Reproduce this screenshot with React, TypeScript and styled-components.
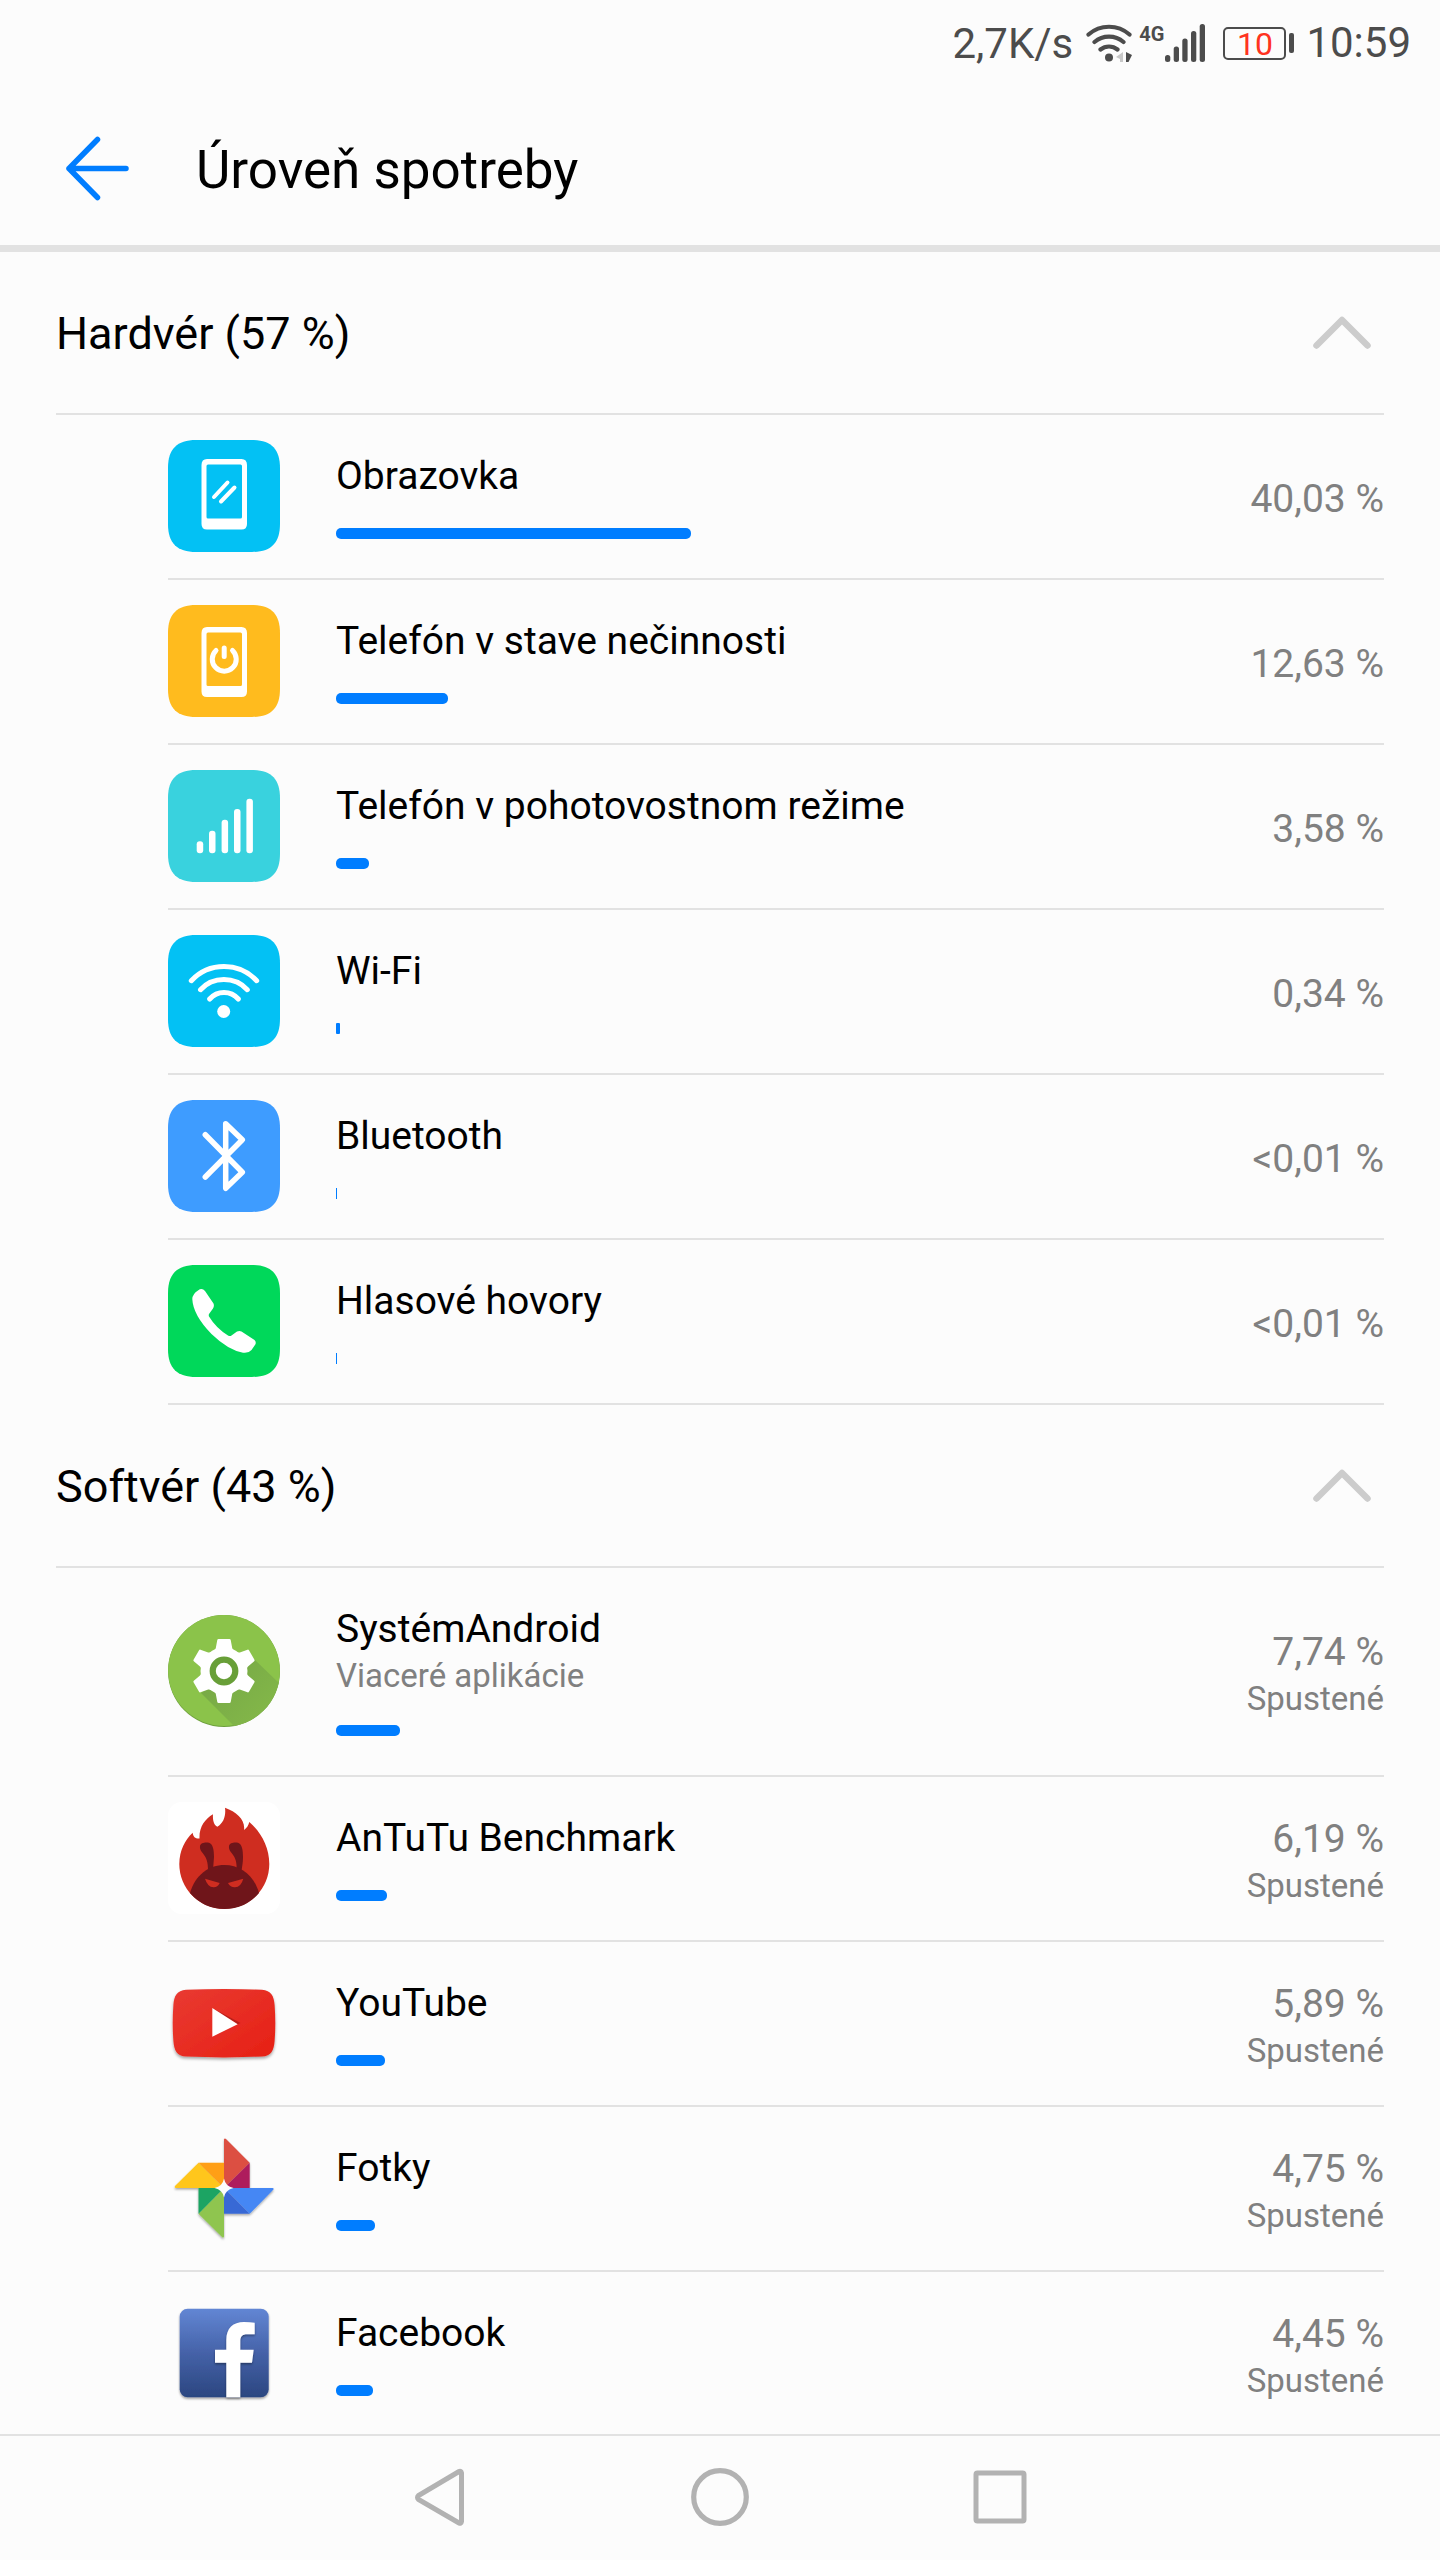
import React, { useState } from "react";
import styled, { createGlobalStyle } from "styled-components";

const GlobalStyle = createGlobalStyle`
  *, *::before, *::after { box-sizing: border-box; }
  body {
    margin: 0;
    background: #fcfcfc;
    color: #000;
    font-family: Roboto, "Noto Sans", sans-serif;
  }
  button {
    padding: 0;
    border: 0;
    background: none;
    color: inherit;
    font: inherit;
    text-align: left;
    cursor: pointer;
  }
  svg { display: block; flex: none; }
`;

const Screen = styled.div`
  display: flex;
  flex-direction: column;
  height: 100vh;
`;

const StatusBar = styled.div`
  display: flex;
  flex: none;
  align-items: center;
  justify-content: flex-end;
  height: 90px;
  padding: 0 29px 4px 0;
  color: #4c4c4c;
  font-size: 42px;
  line-height: 48px;
`;

const Speed = styled.span`
  padding-top: 2px;
  margin-right: 13px;
`;

const Network = styled.span`
  display: flex;
  align-items: flex-start;
  height: 38px;
  margin: 0 17px 0 6px;
`;

const NetworkType = styled.span`
  font-family: "Liberation Sans Narrow", Roboto, sans-serif;
  font-size: 20px;
  font-weight: 700;
  line-height: 20px;
`;

const Battery = styled.span`
  display: flex;
  align-items: center;
  gap: 3px;
  margin-right: 12px;

  &::after {
    content: "";
    width: 5px;
    height: 20px;
    border-radius: 2px;
    background: #4c4c4c;
  }
`;

const BatteryLevel = styled.span`
  width: 63px;
  height: 33px;
  border: 2px solid #4c4c4c;
  border-radius: 5px;
  color: #ff3320;
  font-size: 32px;
  line-height: 30px;
  text-align: center;
`;

const AppBar = styled.header`
  display: flex;
  flex: none;
  align-items: center;
  gap: 60px;
  height: 162px;
  padding: 0 56px;
  border-bottom: 7px solid #e2e2e2;
`;

const Title = styled.h1`
  margin: 0;
  padding-top: 4px;
  font-size: 53px;
  font-weight: 400;
  line-height: 64px;
`;

const Content = styled.main`
  flex: 1;
  min-height: 0;
  overflow-y: auto;
  scrollbar-width: none;
`;

const Section = styled.section`
  padding: 0 56px;
`;

const SectionTitle = styled.h2`
  margin: 0;
  border-bottom: 2px solid #e2e2e2;
  font-size: 45px;
  font-weight: 400;
  line-height: 52px;
`;

const SectionToggle = styled.button`
  display: flex;
  align-items: center;
  justify-content: space-between;
  width: 100%;
  height: 161px;
  padding-right: 13px;
`;

const SectionLabel = styled.span`
  padding-top: 2px;
`;

const Chevron = styled.svg<{ $open: boolean }>`
  transform: ${(p) => (p.$open ? "none" : "rotate(180deg)")};
`;

const List = styled.ul`
  margin: 0;
  padding: 0 0 0 112px;
  list-style: none;
`;

const Row = styled.li<{ $last: boolean }>`
  display: flex;
  align-items: center;
  gap: 56px;
  padding: 25px 0 26px;
  border-bottom: ${(p) => (p.$last ? "0" : "2px solid #e2e2e2")};
`;

const Usage = styled.div`
  flex: 1;
  min-width: 0;
  padding: 11px 0 13px;
`;

const Name = styled.div`
  font-size: 39px;
  line-height: 50px;
`;

const Note = styled.div`
  color: #808080;
  font-size: 33px;
  line-height: 44px;
`;

const Bar = styled.div<{ $width: number }>`
  width: ${(p) => p.$width}px;
  height: 11px;
  margin-top: 27px;
  border-radius: ${(p) => Math.min(5, Math.floor(p.$width / 4))}px;
  background: #007dff;
`;

const Reading = styled.div`
  padding-top: 6px;
  text-align: right;
  white-space: nowrap;
`;

const Percent = styled.div`
  color: #808080;
  font-size: 39px;
  line-height: 50px;
`;

const NavBar = styled.nav`
  display: flex;
  flex: none;
  justify-content: center;
  height: 126px;
  border-top: 2px solid #e2e2e2;
`;

const NavButton = styled.button`
  display: flex;
  align-items: center;
  justify-content: center;
  width: 280px;
`;

const Icon = ({ children }: { children: React.ReactNode }) => (
  <svg width="112" height="112" viewBox="0 0 112 112" aria-hidden="true">
    {children}
  </svg>
);

const Tile = ({ color }: { color: string }) => (
  <path
    fill={color}
    d="M0 28C0 9 9 0 28 0H84C103 0 112 9 112 28V84C112 103 103 112 84 112H28C9 112 0 103 0 84Z"
  />
);

const ScreenIcon = () => (
  <Icon>
    <Tile color="#03c1f4" />
    <path
      fill="#fff"
      fillRule="evenodd"
      d="M39 19H73.500Q79 19 79 25V84Q79 89.500 73.500 89.500H39Q33.500 89.500 33.500 84V25Q33.500 19 39 19ZM40 24.500Q38.500 24.500 38.500 26V77Q38.500 78.500 40 78.500H72.500Q74 78.500 74 77V26Q74 24.500 72.500 24.500Z"
    />
    <path d="M46 57 59.500 42.500M53 61.500 66.500 47.500" stroke="#fff" strokeWidth="4" strokeLinecap="round" />
  </Icon>
);

const IdleIcon = () => (
  <Icon>
    <Tile color="#ffbb1e" />
    <path
      fill="#fff"
      fillRule="evenodd"
      d="M39 22H73.500Q79 22 79 28V86.500Q79 92 73.500 92H39Q33.500 92 33.500 86.500V28Q33.500 22 39 22ZM40 27.500Q38.500 27.500 38.500 29V79.500Q38.500 81 40 81H72.500Q74 81 74 79.500V29Q74 27.500 72.500 27.500Z"
    />
    <path
      d="M48 45.500A12 12 0 1 0 64.500 45.500M56.200 43V51.500"
      fill="none"
      stroke="#fff"
      strokeWidth="5"
      strokeLinecap="round"
    />
  </Icon>
);

const SignalIcon = () => (
  <Icon>
    <Tile color="#39d2de" />
    <g fill="#fff">
      <rect x="28.700" y="71.300" width="6.500" height="12" rx="3" />
      <rect x="41" y="60.700" width="6.500" height="22.600" rx="3" />
      <rect x="53.600" y="49.700" width="6.500" height="33.600" rx="3" />
      <rect x="66" y="39" width="6.500" height="44.300" rx="3" />
      <rect x="78.400" y="28.700" width="6.500" height="54.600" rx="3" />
    </g>
  </Icon>
);

const WifiIcon = () => (
  <Icon>
    <Tile color="#03c1f4" />
    <path
      d="M23.300 45.700A44.700 44.700 0 0 1 88.700 45.700M32.500 54.700A32.200 32.200 0 0 1 79.300 54.700M41.700 64A19 19 0 0 1 70.300 64"
      fill="none"
      stroke="#fff"
      strokeWidth="5"
      strokeLinecap="round"
    />
    <circle cx="55.700" cy="76.500" r="6.500" fill="#fff" />
  </Icon>
);

const BluetoothIcon = () => (
  <Icon>
    <Tile color="#3e9cff" />
    <path
      d="M37.300 34.700 74.300 72.300 57.700 88.300V23.700L74.300 39.700 37.300 77"
      fill="none"
      stroke="#fff"
      strokeWidth="5.500"
      strokeLinecap="round"
      strokeLinejoin="round"
    />
  </Icon>
);

const CallIcon = () => (
  <Icon>
    <Tile color="#00d85a" />
    <path
      fill="#fff"
      d="M30 25.500Q34 22.500 37 26L45.500 38.500Q46.500 41 45 43.500L41 49Q40.500 50 41 51.500 48 63 60 70.500 62 71.500 63.500 70.500L69 66.500Q71.500 65.500 73.500 66.500L86.500 75Q88.500 77 87.300 79.500L83.500 85Q80.500 88.500 75 87.700 60 85 43.500 69 25 50 24.300 34 24.500 29 30 25.500Z"
    />
  </Icon>
);

const AndroidIcon = () => (
  <Icon>
    <defs>
      <clipPath id="androidDisc">
        <circle cx="56" cy="56" r="56" />
      </clipPath>
      <linearGradient id="androidShade" x1="50" y1="60" x2="95" y2="105" gradientUnits="userSpaceOnUse">
        <stop offset="0" stopColor="#78aa46" />
        <stop offset="1" stopColor="#83b749" />
      </linearGradient>
    </defs>
    <circle cx="56" cy="56" r="56" fill="#6d9f3c" />
    <g clipPath="url(#androidDisc)">
      <circle cx="56" cy="55" r="56" fill="#8bc34a" />
      <path d="M84 42 114 71V112H67L33 78Z" fill="url(#androidShade)" />
    </g>
    <g fill="#fff">
      <circle cx="56" cy="56" r="23.500" />
      {[0, 60, 120, 180, 240, 300].map((angle) => (
        <path
          key={angle}
          transform={`rotate(${angle} 56 56)`}
          d="M50.500 24H61.500Q62.500 24 62.700 25L64.200 33Q65 36 70 38L68 42H44L42 38Q47 36 47.800 33L49.300 25Q49.500 24 50.500 24Z"
        />
      ))}
    </g>
    <circle cx="56" cy="56" r="11.300" fill="#fff" stroke="#689f38" strokeWidth="6.200" />
  </Icon>
);

const AntutuIcon = () => (
  <Icon>
    <rect width="112" height="112" rx="14" fill="#fff" />
    <path
      fill="#cf2d20"
      d="M11.300 62C11.500 48 17 38 24.700 30.700C25 35 28 37 31.500 36.500C31 25 37 17 45 12.300C44.500 18 46 23 49.300 24.700C56 21 58 13 57 5.700C69 10 77.500 18 76 28C79 26 80.500 23 81.300 20C93 30 101.300 45 101.300 62A45 45 0 0 1 11.300 62Z"
    />
    <g fill="#6f151a">
      <path d="M32 44C32.500 40.500 38 40 41 40.800C45 42 46 48 46 55L45 68H40C40 60 38.500 56 35 51.500C33 49 31.500 47 32 44Z" />
      <path d="M61 44C61.500 40.500 67 40 70 40.800C74 42 75 48 75 55C75 61 74 65 73.500 69H68.500C69 60 67.500 56 64 51.500C62 49 60.500 47 61 44Z" />
      <path d="M22 91C27 73 41 63 56.500 63S86 73 91 91A45 45 0 0 1 22 91Z" />
    </g>
    <g fill="#cf2d20">
      <path d="M37 76.700 51.700 81Q49.500 85.500 45.500 85.300 39.500 85 37 76.700Z" />
      <path d="M75.300 76.700 60 81Q62.500 85.500 67 85.300 73 85 75.300 76.700Z" />
    </g>
  </Icon>
);

const YoutubeIcon = () => (
  <Icon>
    <defs>
      <linearGradient id="youtubeRed" x1="0" y1="0" x2="1" y2="1">
        <stop offset="0" stopColor="#e93a32" />
        <stop offset="1" stopColor="#e62014" />
      </linearGradient>
      <filter id="youtubeShadow" x="-10%" y="-10%" width="120%" height="130%">
        <feDropShadow dx="0" dy="2" stdDeviation="1.500" floodOpacity="0.350" />
      </filter>
    </defs>
    <path
      filter="url(#youtubeShadow)"
      fill="url(#youtubeRed)"
      d="M18 22.800Q56 21.200 94 22.800C103 23.500 106 29 106.600 38Q108 56 106.600 74C106 83.500 103 89 94 89.600Q56 91.200 18 89.600C9 89 6 83.500 5.400 74Q4 56 5.400 38C6 29 9 23.500 18 22.800Z"
    />
    <path d="M44.300 41 72.500 56 69.700 57.200Z" fill="#b8201a" />
    <path d="M44.300 41 69.700 57.200 44.300 69.700Z" fill="#fff" />
  </Icon>
);

const PhotosIcon = () => (
  <Icon>
    <defs>
      <filter id="photosShadow" x="-10%" y="-10%" width="120%" height="120%">
        <feDropShadow dx="0" dy="1.500" stdDeviation="1" floodOpacity="0.350" />
      </filter>
    </defs>
    <g filter="url(#photosShadow)">
      <path d="M56 7.500Q56.500 6 58 7L81.700 30.700 56 56Z" fill="#dc4f43" />
      <path d="M81.700 30.700V56H56Z" fill="#ae1d5d" />
      <path d="M56 56H104.500Q106.500 56.500 105 58L81.700 81.700Z" fill="#4587f4" />
      <path d="M56 56 81.700 81.700H56Z" fill="#3969d5" />
      <path d="M56 56V104.500Q55.500 106.500 54 105L30.500 81.700Z" fill="#8fc54f" />
      <path d="M30.500 56H56L30.500 81.700Z" fill="#1ea463" />
      <path d="M7.500 56Q6 55.500 7 54L30.500 30.700 56 56Z" fill="#ffc61d" />
      <path d="M30.500 30.700H56V56Z" fill="#ff9f15" />
    </g>
    <path d="M56 46.500Q57.500 54.500 65.500 56 57.500 57.500 56 65.500 54.500 57.500 46.500 56 54.500 54.500 56 46.500Z" fill="#fcfcfc" />
  </Icon>
);

const FacebookIcon = () => (
  <Icon>
    <defs>
      <linearGradient id="facebookBlue" x1="0" y1="0" x2="0" y2="1">
        <stop offset="0" stopColor="#6286d4" />
        <stop offset="0.500" stopColor="#4562a8" />
        <stop offset="1" stopColor="#2b4680" />
      </linearGradient>
      <filter id="facebookShadow" x="-10%" y="-10%" width="120%" height="120%">
        <feDropShadow dx="0" dy="1.500" stdDeviation="1" floodOpacity="0.400" />
      </filter>
    </defs>
    <rect
      x="11.700"
      y="11.700"
      width="89"
      height="88.600"
      rx="8"
      fill="url(#facebookBlue)"
      filter="url(#facebookShadow)"
    />
    <path
      fill="#fff"
      filter="url(#facebookShadow)"
      d="M58.300 100.300V65.700H47V52.700H58.300V43C58.300 31 65 25 76 25Q82 25 86.700 25.700V37.300H79.500C74 37.300 72.300 40 72.300 44V52.700H85.700L84 65.700H72.300V100.300Z"
    />
  </Icon>
);

type Item = {
  name: string;
  note?: string;
  percent: string;
  status?: string;
  bar: number;
  icon: () => React.ReactElement;
};

const hardware: Item[] = [
  { name: "Obrazovka", percent: "40,03 %", bar: 355, icon: ScreenIcon },
  { name: "Telefón v stave nečinnosti", percent: "12,63 %", bar: 112, icon: IdleIcon },
  { name: "Telefón v pohotovostnom režime", percent: "3,58 %", bar: 33, icon: SignalIcon },
  { name: "Wi-Fi", percent: "0,34 %", bar: 4, icon: WifiIcon },
  { name: "Bluetooth", percent: "<0,01 %", bar: 1, icon: BluetoothIcon },
  { name: "Hlasové hovory", percent: "<0,01 %", bar: 1, icon: CallIcon },
];

const software: Item[] = [
  {
    name: "SystémAndroid",
    note: "Viaceré aplikácie",
    percent: "7,74 %",
    status: "Spustené",
    bar: 64,
    icon: AndroidIcon,
  },
  { name: "AnTuTu Benchmark", percent: "6,19 %", status: "Spustené", bar: 51, icon: AntutuIcon },
  { name: "YouTube", percent: "5,89 %", status: "Spustené", bar: 49, icon: YoutubeIcon },
  { name: "Fotky", percent: "4,75 %", status: "Spustené", bar: 39, icon: PhotosIcon },
  { name: "Facebook", percent: "4,45 %", status: "Spustené", bar: 37, icon: FacebookIcon },
];

const UsageSection = ({ title, items, closed }: { title: string; items: Item[]; closed?: boolean }) => {
  const [open, setOpen] = useState(true);
  return (
    <Section>
      <SectionTitle>
        <SectionToggle type="button" aria-expanded={open} onClick={() => setOpen(!open)}>
          <SectionLabel>{title}</SectionLabel>
          <Chevron $open={open} width="58" height="34" viewBox="0 0 58 34" aria-hidden="true">
            <path
              d="M3.500 29.500 29 4 54.500 29.500"
              fill="none"
              stroke="#ccc"
              strokeWidth="6.500"
              strokeLinecap="round"
              strokeLinejoin="round"
            />
          </Chevron>
        </SectionToggle>
      </SectionTitle>
      {open && (
        <List>
          {items.map(({ name, note, percent, status, bar, icon: ItemIcon }, i) => (
            <Row key={name} $last={!!closed && i === items.length - 1}>
              <ItemIcon />
              <Usage>
                <Name>{name}</Name>
                {note && <Note>{note}</Note>}
                <Bar $width={bar} />
              </Usage>
              <Reading>
                <Percent>{percent}</Percent>
                {status && <Note>{status}</Note>}
              </Reading>
            </Row>
          ))}
        </List>
      )}
    </Section>
  );
};

export default function App() {
  return (
    <>
      <GlobalStyle />
      <Screen>
        <StatusBar>
          <Speed>2,7K/s</Speed>
          <svg width="47" height="38" viewBox="0 0 47 38" aria-hidden="true">
            <path
              d="M2.500 10.500A31 31 0 0 1 43.500 10.500M8.500 18A22.500 22.500 0 0 1 37.500 18M14.500 25.500A13.500 13.500 0 0 1 31.500 25.500"
              fill="none"
              stroke="#4c4c4c"
              strokeWidth="4.200"
              strokeLinecap="round"
            />
            <circle cx="23" cy="33.500" r="4" fill="#4c4c4c" />
            <path d="M37 28V38H34V35L30 33Z" fill="#c8c8c8" />
            <path d="M40 28 46 31 42.500 38H40Z" fill="#4c4c4c" />
          </svg>
          <Network>
            <NetworkType>4G</NetworkType>
            <svg width="42" height="38" viewBox="0 0 42 38" aria-hidden="true">
              <g fill="#4c4c4c">
                <rect x="1" y="31" width="5.300" height="7" rx="2.500" />
                <rect x="9.700" y="22.500" width="5.300" height="15.500" rx="2.500" />
                <rect x="18.300" y="14.500" width="5.300" height="23.500" rx="2.500" />
                <rect x="27" y="7" width="5.300" height="31" rx="2.500" />
                <rect x="35.700" y="0" width="5.300" height="38" rx="2.500" />
              </g>
            </svg>
          </Network>
          <Battery>
            <BatteryLevel>10</BatteryLevel>
          </Battery>
          <time>10:59</time>
        </StatusBar>
        <AppBar>
          <button type="button" aria-label="Späť">
            <svg width="80" height="80" viewBox="0 0 80 80" aria-hidden="true">
              <path
                d="M41.500 11.500 13 40.500 41.500 69.500M13 40.500H70"
                fill="none"
                stroke="#007dff"
                strokeWidth="5.500"
                strokeLinecap="round"
                strokeLinejoin="round"
              />
            </svg>
          </button>
          <Title>Úroveň spotreby</Title>
        </AppBar>
        <Content>
          <UsageSection title="Hardvér (57 %)" items={hardware} />
          <UsageSection title="Softvér (43 %)" items={software} closed />
        </Content>
        <NavBar>
          <NavButton type="button" aria-label="Naspäť">
            <svg width="60" height="60" viewBox="0 0 60 60" aria-hidden="true">
              <path
                d="M51.500 5V53.500Q51 56 49 55L8.500 31.500Q6.500 29.500 8.500 27.500L49 3.500Q51 2.500 51.500 5Z"
                fill="none"
                stroke="#b2b2b2"
                strokeWidth="5"
              />
            </svg>
          </NavButton>
          <NavButton type="button" aria-label="Domov">
            <svg width="60" height="60" viewBox="0 0 60 60" aria-hidden="true">
              <circle cx="30" cy="29" r="26.300" fill="none" stroke="#b2b2b2" strokeWidth="5.200" />
            </svg>
          </NavButton>
          <NavButton type="button" aria-label="Nedávne">
            <svg width="60" height="60" viewBox="0 0 60 60" aria-hidden="true">
              <rect x="6" y="5" width="48" height="48" rx="1.500" fill="none" stroke="#b2b2b2" strokeWidth="5" />
            </svg>
          </NavButton>
        </NavBar>
      </Screen>
    </>
  );
}
